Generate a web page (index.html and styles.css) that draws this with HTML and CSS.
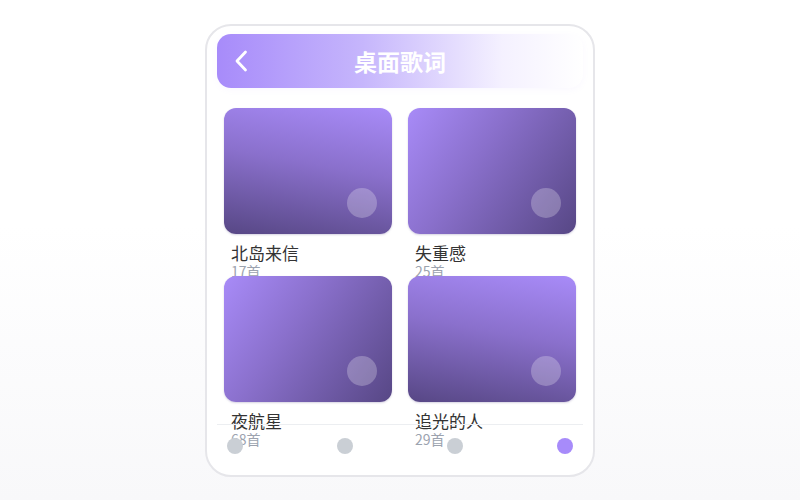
FILE: index.html
```html
<!DOCTYPE html>
<html lang="zh-CN">
<head>
    <meta charset="UTF-8">
    <meta name="viewport" content="width=device-width, initial-scale=1.0">
    <title>桌面歌词</title>
    <link rel="stylesheet" href="styles.css">
</head>
<body>
<div class="phone">
    <header class="topbar">
        <button class="back-btn" aria-label="返回">
            <svg width="14" height="22" viewBox="0 0 14 22" fill="none">
                <path d="M11.5 2 L3 11 L11.5 20" stroke="#fff" stroke-width="2.8" stroke-linecap="round" stroke-linejoin="round"/>
            </svg>
        </button>
        <h1 class="title">桌面歌词</h1>
    </header>

    <div class="grid">
        <div class="item">
            <div class="cover cover-down"><span class="play-dot"></span></div>
            <div class="name">北岛来信</div>
            <div class="count">17首</div>
        </div>
        <div class="item">
            <div class="cover cover-diag"><span class="play-dot"></span></div>
            <div class="name">失重感</div>
            <div class="count">25首</div>
        </div>
        <div class="item">
            <div class="cover cover-diag"><span class="play-dot"></span></div>
            <div class="name">夜航星</div>
            <div class="count">68首</div>
        </div>
        <div class="item">
            <div class="cover cover-down"><span class="play-dot"></span></div>
            <div class="name">追光的人</div>
            <div class="count">29首</div>
        </div>
    </div>

    <nav class="tabbar">
        <span class="tab"></span>
        <span class="tab"></span>
        <span class="tab"></span>
        <span class="tab active"></span>
    </nav>
</div>
</body>
</html>
```

FILE: styles.css
```css
html, body {
    margin: 0;
    height: 100%;
}

body {
    font-family: "Noto Sans", "Noto Sans CJK SC", sans-serif;
    background: linear-gradient(180deg, #ffffff 0%, #ffffff 45%, #f8f8fa 100%);
    display: flex;
    justify-content: center;
    align-items: center;
    height: 100vh;
}

.phone {
    position: relative;
    box-sizing: border-box;
    width: 390px;
    height: 453px;
    padding: 8px 10px;
    background: #fff;
    border: 2px solid #e6e6ea;
    border-radius: 26px;
    overflow: hidden;
}

.topbar {
    position: relative;
    display: flex;
    align-items: center;
    justify-content: center;
    height: 54px;
    border-radius: 14px;
    background: linear-gradient(90deg, #a78bfa 0%, #c6b6fc 40%, rgba(240, 235, 255, 0.7) 78%, rgba(255, 255, 255, 0) 100%);
    box-shadow: 0 2px 6px rgba(167, 139, 250, 0.06);
}

.back-btn {
    position: absolute;
    left: 17px;
    top: 50%;
    transform: translateY(-50%);
    padding: 0;
    border: none;
    background: none;
    display: flex;
    cursor: pointer;
}

.title {
    margin: 0;
    color: #fff;
    font-size: 23px;
    font-weight: 700;
    font-family: "Noto Sans CJK SC", sans-serif;
}

.grid {
    display: grid;
    grid-template-columns: 168px 168px;
    column-gap: 16px;
    row-gap: 16px;
    margin-top: 20px;
    padding-left: 7px;
}

.item {
    height: 152px;
}

.cover {
    position: relative;
    height: 126px;
    border-radius: 12px;
    box-shadow: 0 1px 2px rgba(91, 74, 138, 0.25);
}

.cover-down {
    background: linear-gradient(190deg, #a88bf8 0%, #8a70cc 45%, #574785 100%);
}

.cover-diag {
    background: linear-gradient(125deg, #a88bf8 0%, #8a70cc 40%, #574785 100%);
}

.play-dot {
    position: absolute;
    right: 15px;
    bottom: 16px;
    width: 30px;
    height: 30px;
    border-radius: 50%;
    background: rgba(255, 255, 255, 0.25);
}

.name {
    margin-top: 9px;
    padding-left: 7px;
    font-family: "Noto Sans CJK SC", sans-serif;
    font-size: 17px;
    line-height: 20px;
    color: #333;
    font-weight: 400;
}

.count {
    padding-left: 7px;
    font-family: "Noto Sans CJK SC", sans-serif;
    font-size: 14px;
    line-height: 17px;
    color: #9ca3af;
    font-weight: 400;
}

.tabbar {
    position: absolute;
    left: 10px;
    right: 10px;
    bottom: 0;
    box-sizing: border-box;
    height: 51px;
    padding: 13px 10px 0;
    border-top: 1px solid #eceef1;
    display: flex;
    justify-content: space-between;
    align-items: flex-start;
}

.tab {
    width: 16px;
    height: 16px;
    border-radius: 50%;
    background: #cacfd5;
}

.tab.active {
    background: #a78bfa;
}
```
